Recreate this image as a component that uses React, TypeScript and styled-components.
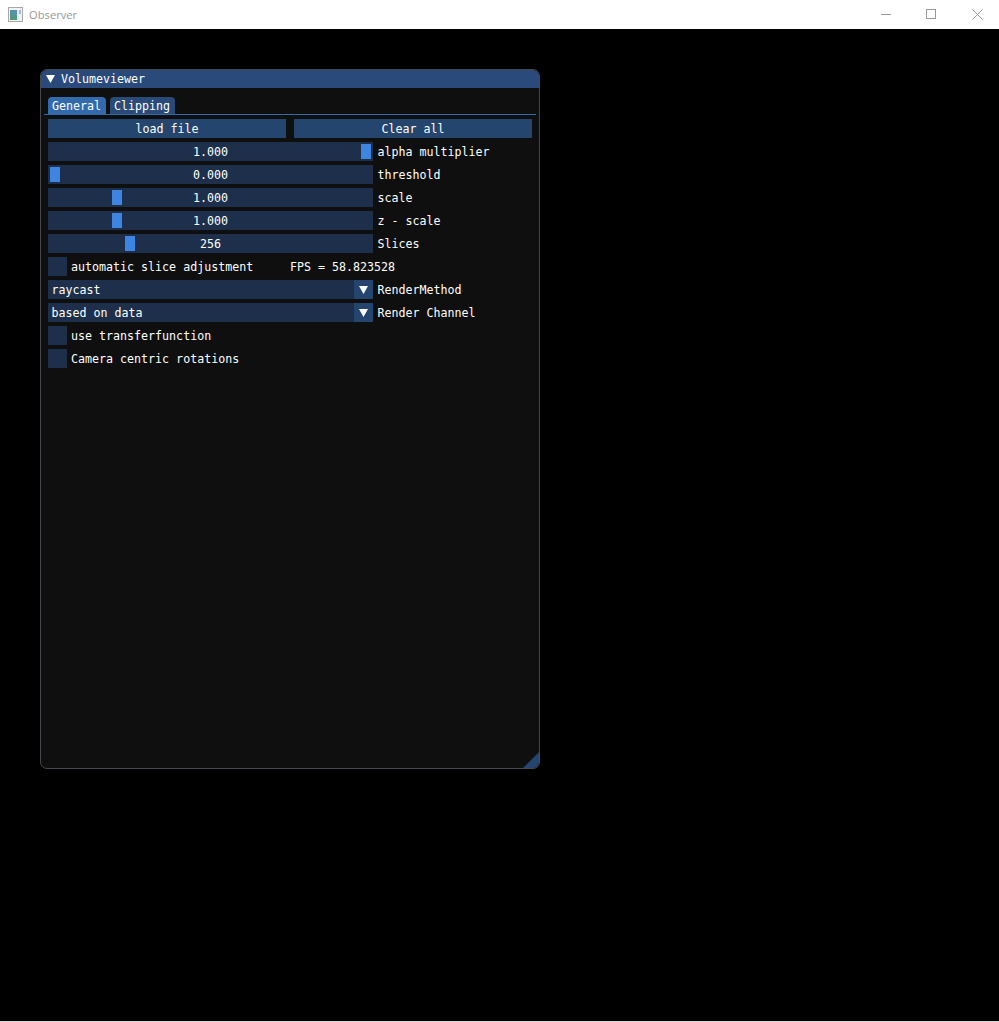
import React from "react";
import styled, {createGlobalStyle} from "styled-components";

const GlobalStyle = createGlobalStyle`
	html, body {
		margin: 0;
		padding: 0;
		background: #000;
	}
	#root {
		height: 1022px;
	}
`;

const Page = styled.div`
	width: 999px;
	height: 1022px;
	display: flex;
	flex-direction: column;
	background: #000;
	overflow: hidden;
`;

const TitleBar = styled.div`
	height: 29px;
	flex-shrink: 0;
	display: flex;
	align-items: center;
	background: #fff;
	padding-left: 8px;
	font: 11.2px "Open Sans", "Noto Sans", sans-serif;
	color: #999;
`;

const AppName = styled.span`
	margin-left: 6px;
	flex: 1;
`;

const WinButton = styled.div`
	width: 46px;
	height: 29px;
	box-sizing: border-box;
	padding: 0 0 1px 2px;
	display: flex;
	align-items: center;
	justify-content: center;
`;

const Canvas = styled.div`
	flex: 1;
	padding: 40px 0 0 40px;
	border-bottom: 1px solid #d8d8d8;
`;

const Window = styled.div`
	position: relative;
	width: 500px;
	height: 700px;
	box-sizing: border-box;
	border: 1px solid #47474f;
	border-radius: 7px;
	background: #0f0f0f;
	overflow: hidden;
	font: 11.65px/13px "DejaVu Sans Mono", "Liberation Mono", monospace;
	color: #fff;
`;

const WindowTitle = styled.div`
	height: 18px;
	display: flex;
	align-items: center;
	gap: 6px;
	padding-left: 5px;
	background: #294a7a;
`;

const Body = styled.div`
	display: flex;
	flex-direction: column;
	padding: 9px 3px 0;
`;

const TabBar = styled.div`
	height: 17px;
	display: flex;
	align-items: flex-start;
	gap: 4px;
	padding-left: 4px;
	border-bottom: 1px solid #3369ad;
`;

const Tab = styled.div<{$active?: boolean}>`
	height: 17px;
	box-sizing: border-box;
	padding: 2px 5px 0 4px;
	display: flex;
	align-items: center;
	border-radius: 4px 4px 0 0;
	background: ${(p) => (p.$active ? "#3369ad" : "#2a4a78")};
`;

const Rows = styled.div`
	display: flex;
	flex-direction: column;
	gap: 4px;
	padding: 4px 4px 0;
`;

const Row = styled.div`
	height: 19px;
	display: flex;
	align-items: center;
`;

const ActionButton = styled.div`
	width: 238px;
	height: 19px;
	box-sizing: border-box;
	padding-top: 2px;
	display: flex;
	align-items: center;
	justify-content: center;
	background: #24456d;

	& + & {
		margin-left: 8px;
	}
`;

const Slider = styled.div`
	position: relative;
	width: 325px;
	height: 19px;
	box-sizing: border-box;
	padding-top: 2px;
	display: flex;
	align-items: center;
	justify-content: center;
	background: #1d2f4a;
`;

const Grab = styled.div`
	position: absolute;
	top: 2px;
	bottom: 2px;
	width: 10px;
	background: #3d85e0;
`;

const Value = styled.span`
	position: relative;
`;

const Label = styled.span`
	margin: 2px 0 0 4.5px;
`;

const Checkbox = styled.div`
	width: 19px;
	height: 19px;
	flex-shrink: 0;
	background: #1d2f4a;
`;

const CheckLabel = styled.span`
	margin: 2px 0 0 4px;
	width: 219px;
`;

const Fps = styled.span`
	margin-top: 2px;
`;

const Combo = styled.div`
	width: 325px;
	height: 19px;
	display: flex;
	align-items: center;
	padding-left: 3.5px;
	box-sizing: border-box;
	background: #1d2f4a;
`;

const ComboText = styled.span`
	flex: 1;
	margin-top: 2px;
`;

const ComboArrow = styled.div`
	width: 19px;
	height: 19px;
	display: flex;
	align-items: center;
	justify-content: center;
	background: #24456d;
`;

const ResizeGrip = styled.div`
	position: absolute;
	right: 0;
	bottom: 0;
	width: 16px;
	height: 16px;
	background: #24456d;
	clip-path: polygon(100% 0, 100% 100%, 0 100%);
`;

const Triangle = () => (
	<svg width="9" height="8" viewBox="0 0 9 8">
		<polygon points="0,0 9,0 4.5,8" fill="#fff" />
	</svg>
);

// slider rows, grab offset is worked out from the fraction of the free track
const sliders = [
	{label: "alpha multiplier", value: "1.000", pos: 1},
	{label: "threshold", value: "0.000", pos: 0},
	{label: "scale", value: "1.000", pos: 0.2},
	{label: "z - scale", value: "1.000", pos: 0.2},
	{label: "Slices", value: "256", pos: 0.2412},
];

export default function App() {
	return (
		<Page>
			<GlobalStyle />
			<TitleBar>
				<svg width="15" height="15" viewBox="0 0 15 15">
					<defs>
						<linearGradient id="appIcon" x1="0" y1="0" x2="0" y2="1">
							<stop offset="0" stopColor="#5b8fb5" />
							<stop offset="1" stopColor="#4f9a78" />
						</linearGradient>
					</defs>
					<rect x="0.5" y="0.5" width="14" height="14" fill="#f2f2f2" stroke="#a8a8a8" />
					<rect x="2" y="3" width="7" height="10" fill="url(#appIcon)" />
					<rect x="9" y="3" width="2" height="10" fill="#e4eaec" />
					<rect x="11" y="3" width="2" height="4" fill="#a9bbc4" />
				</svg>
				<AppName>Observer</AppName>
				<WinButton>
					<svg width="11" height="11" viewBox="0 0 11 11" overflow="visible">
						<line x1="1" y1="5.5" x2="11" y2="5.5" stroke="#999" />
					</svg>
				</WinButton>
				<WinButton>
					<svg width="11" height="11" viewBox="0 0 11 11">
						<rect x="0.5" y="0.5" width="9" height="9" fill="none" stroke="#999" />
					</svg>
				</WinButton>
				<WinButton>
					<svg width="11" height="11" viewBox="0 0 11 11">
						<path d="M0.5 0.5L10.5 10.5M10.5 0.5L0.5 10.5" stroke="#999" fill="none" />
					</svg>
				</WinButton>
			</TitleBar>
			<Canvas>
				<Window>
					<WindowTitle>
						<Triangle />
						<span>Volumeviewer</span>
					</WindowTitle>
					<Body>
						<TabBar>
							<Tab $active>General</Tab>
							<Tab>Clipping</Tab>
						</TabBar>
						<Rows>
							<Row>
								<ActionButton>load file</ActionButton>
								<ActionButton>Clear all</ActionButton>
							</Row>
							{sliders.map((s) => (
								<Row key={s.label}>
									<Slider>
										<Grab style={{left: 2 + s.pos * 311}} />
										<Value>{s.value}</Value>
									</Slider>
									<Label>{s.label}</Label>
								</Row>
							))}
							<Row>
								<Checkbox />
								<CheckLabel>automatic slice adjustment</CheckLabel>
								<Fps>FPS = 58.823528</Fps>
							</Row>
							<Row>
								<Combo>
									<ComboText>raycast</ComboText>
									<ComboArrow><Triangle /></ComboArrow>
								</Combo>
								<Label>RenderMethod</Label>
							</Row>
							<Row>
								<Combo>
									<ComboText>based on data</ComboText>
									<ComboArrow><Triangle /></ComboArrow>
								</Combo>
								<Label>Render Channel</Label>
							</Row>
							<Row>
								<Checkbox />
								<CheckLabel>use transferfunction</CheckLabel>
							</Row>
							<Row>
								<Checkbox />
								<CheckLabel>Camera centric rotations</CheckLabel>
							</Row>
						</Rows>
					</Body>
					<ResizeGrip />
				</Window>
			</Canvas>
		</Page>
	);
}
